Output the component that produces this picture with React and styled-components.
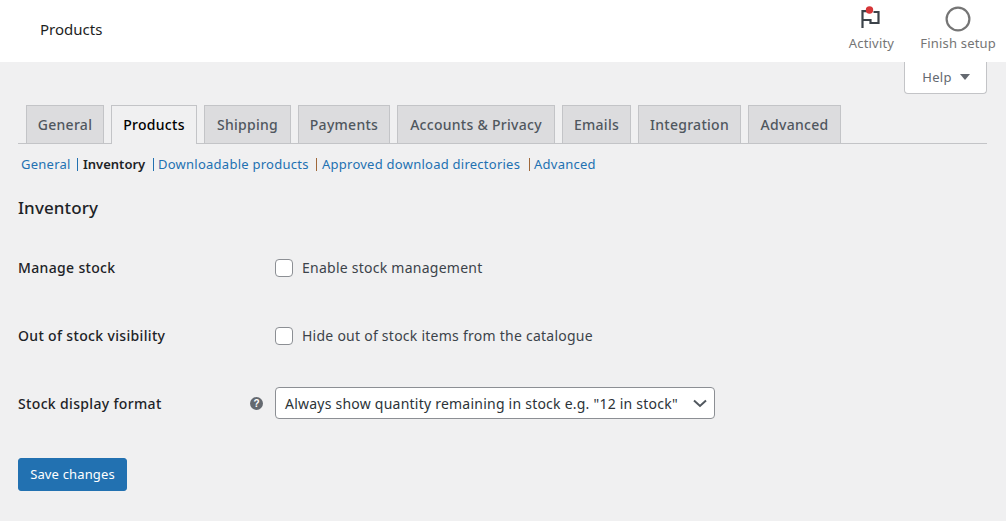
import React from "react";
import styled, { createGlobalStyle } from "styled-components";

const Global = createGlobalStyle`
  html, body { margin: 0; padding: 0; background: #f0f0f1; }
  body { font-family: "Noto Sans", "Open Sans", sans-serif; font-size: 13px; color: #3c434a; }
  #root { width: 1006px; height: 521px; overflow: hidden; }
`;

const Header = styled.header`
  height: 62px; background: #fff; display: flex; justify-content: space-between; align-items: flex-start;
`;
const PageTitle = styled.h1`
  margin: 19px 0 0 40px; font-size: 15px; line-height: 20px; font-weight: 400; color: #1e1e1e;
`;
const Actions = styled.div`
  display: flex; gap: 26px; margin-right: 10px;
`;
const Action = styled.div`
  display: flex; flex-direction: column; align-items: center; height: 62px; color: #757575; font-size: 13px; line-height: 18px; letter-spacing: 0.2px;
  svg { display: block; margin-top: 6px; }
`;
const HelpRow = styled.div`
  display: flex; justify-content: flex-end; padding-right: 19px; height: 32px;
`;
const HelpTab = styled.button`
  width: 83px; height: 32px; box-sizing: border-box; background: #fff; border: 1px solid #c3c4c7; border-top: 0;
  border-radius: 0 0 4px 4px; font: inherit; font-size: 13px; letter-spacing: 0.25px; color: #646970; padding: 0 0 2px 1px; display: flex; align-items: center; justify-content: center; gap: 8px;
  &::after { content: ""; border-left: 5px solid transparent; border-right: 5px solid transparent; border-top: 6px solid #646970; }
`;
const Main = styled.main`
  padding: 11px 19px 0 18px;
`;
const TabBar = styled.nav`
  display: flex; gap: 7px; height: 39px; box-sizing: border-box; padding-left: 8px; border-bottom: 1px solid #c3c4c7;
`;
const Tab = styled.a`
  box-sizing: border-box; height: ${p => (p.$active ? "39px" : "38px")}; width: ${p => p.$w}px;
  display: flex; align-items: center; justify-content: center; padding-bottom: 1px;
  font-size: 14px; font-weight: 500; letter-spacing: 0.28px; white-space: nowrap;
  border: 1px solid #c3c4c7; border-bottom: 0;
  background: ${p => (p.$active ? "#f0f0f1" : "#dcdcde")}; color: ${p => (p.$active ? "#000" : "#50575e")};
`;
const SubNav = styled.ul`
  list-style: none; margin: 0; padding: 10px 0 0 3px; display: flex; height: 20px; line-height: 20px; font-size: 13px; letter-spacing: 0.25px; white-space: nowrap;
`;
const SubItem = styled.li`
  width: ${p => p.$w}px; color: #2271b1; flex: none;
  b { color: #1d2327; font-weight: 600; letter-spacing: 0; }
`;
const SubSep = styled.span`
  width: 1px; height: 13px; background: ${p => p.$c || "#2271b1"}; align-self: center; flex: none; margin-right: ${p => p.$mr}px;
`;
const Heading = styled.h2`
  margin: 22px 0 0; font-size: 17px; line-height: 24px; font-weight: 500; color: #1d2327; letter-spacing: 0.1px;
`;
const Row = styled.div`
  display: flex; align-items: center; height: 32px; margin-top: ${p => p.$mt}px;
`;
const Label = styled.div`
  width: 232px; flex: none; font-size: 14px; font-weight: 500; color: #1d2327; letter-spacing: 0.34px; padding-bottom: ${p => p.$pb ?? 2}px;
`;
const HelpSlot = styled.div`
  width: 25px; flex: none;
  svg { display: block; }
`;
const CheckLabel = styled.label`
  display: flex; align-items: center; gap: 9px; font-size: 14px; color: #3c434a; letter-spacing: 0.25px;
`;
const Check = styled.span`
  width: 16px; height: 16px; border: 1px solid #8c8f94; border-radius: 4px; background: #fff; display: block; flex: none;
`;
const CheckText = styled.span`
  padding-bottom: 1px;
`;
const Select = styled.div`
  width: 440px; height: 32px; box-sizing: border-box; border: 1px solid #8c8f94; border-radius: 4px; background: #fff;
  display: flex; align-items: center; justify-content: space-between; padding: 0 6px 0 9px; font-size: 14px; color: #2c3338; letter-spacing: 0.23px;
`;
const Save = styled.button`
  display: block; margin-top: 39px; width: 109px; height: 33px; background: #2271b1; border: 1px solid #2271b1; border-radius: 3px; color: #fff;
  font: inherit; font-size: 13px; letter-spacing: 0.15px; padding: 0 0 2px;
`;

const tabs = [["General", 78], ["Products", 86, true], ["Shipping", 87], ["Payments", 92], ["Accounts & Privacy", 158], ["Emails", 69], ["Integration", 103], ["Advanced", 93]];

export default function App() {
  return (
    <>
      <Global />
      <Header>
        <PageTitle>Products</PageTitle>
        <Actions>
          <Action>
            <svg width="24" height="28" viewBox="0 0 24 28" fill="none">
              <path d="M8.5 5.2H3.5V22M3.5 14H11.5V17H19.5V6H14.5" stroke="#3c434a" strokeWidth="2.2" />
              <circle cx="10.5" cy="4" r="3.7" fill="#d63638" />
            </svg>
            Activity
          </Action>
          <Action>
            <svg width="26" height="28" viewBox="0 0 26 28" fill="none">
              <circle cx="13" cy="13" r="11.4" stroke="#757575" strokeWidth="2.2" />
            </svg>
            Finish setup
          </Action>
        </Actions>
      </Header>
      <HelpRow><HelpTab>Help</HelpTab></HelpRow>
      <Main>
        <TabBar>
          {tabs.map(([t, w, a]) => <Tab key={t} $w={w} $active={a}>{t}</Tab>)}
        </TabBar>
        <SubNav>
          <SubItem $w={56}>General</SubItem><SubSep $mr={5} />
          <SubItem $w={70}><b>Inventory</b></SubItem><SubSep $mr={4} />
          <SubItem $w={158}>Downloadable products</SubItem><SubSep $mr={5} $c="#a0683a" />
          <SubItem $w={207}>Approved download directories</SubItem><SubSep $mr={4} $c="#a0683a" />
          <SubItem $w={70}>Advanced</SubItem>
        </SubNav>
        <Heading>Inventory</Heading>
        <Row $mt={32}><Label>Manage stock</Label><HelpSlot /><CheckLabel><Check /><CheckText>Enable stock management</CheckText></CheckLabel></Row>
        <Row $mt={36}><Label>Out of stock visibility</Label><HelpSlot /><CheckLabel><Check /><CheckText>Hide out of stock items from the catalogue</CheckText></CheckLabel></Row>
        <Row $mt={35}>
          <Label $pb={0}>Stock display format</Label>
          <HelpSlot>
            <svg width="13" height="13" viewBox="0 0 13 13"><circle cx="6.5" cy="6.5" r="6.5" fill="#646970" /><text x="6.5" y="10" textAnchor="middle" fontSize="10" fontWeight="700" fill="#fff" fontFamily="Liberation Sans">?</text></svg>
          </HelpSlot>
          <Select>
            Always show quantity remaining in stock e.g. "12 in stock"
            <svg width="16" height="16" viewBox="0 0 16 16" fill="none"><path d="M2 5.5l6 5.5 6-5.5" stroke="#50575e" strokeWidth="2" /></svg>
          </Select>
        </Row>
        <Save>Save changes</Save>
      </Main>
    </>
  );
}
